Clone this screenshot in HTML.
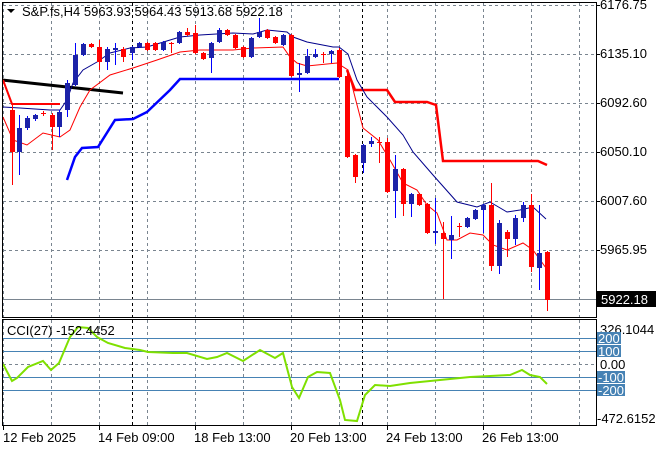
<!DOCTYPE html>
<html><head><meta charset="utf-8"><style>
html,body{margin:0;padding:0;background:#fff;}
svg{display:block;font-family:"Liberation Sans",sans-serif;font-size:13px;}
</style></head><body>
<svg width="660" height="450" viewBox="0 0 660 450" xmlns="http://www.w3.org/2000/svg">
<rect width="660" height="450" fill="#fff"/>
<g stroke="#7a8590" stroke-dasharray="3,3" stroke-width="1">
<path d="M3.5 3V317M51.5 3V317M99.5 3V317M147.5 3V317M195.5 3V317M243.5 3V317M291.5 3V317M339.5 3V317M387.5 3V317M435.5 3V317M483.5 3V317M531.5 3V317M579.5 3V317"/>
<path d="M3 5.5H596M3 54.5H596M3 103.5H596M3 152.5H596M3 201.5H596M3 250.5H596"/>
<path d="M3.5 320V425M51.5 320V425M99.5 320V425M147.5 320V425M195.5 320V425M243.5 320V425M291.5 320V425M339.5 320V425M387.5 320V425M435.5 320V425M483.5 320V425M531.5 320V425M579.5 320V425"/>
<path d="M3 364.5H596"/>
</g>
<g stroke="#000" stroke-dasharray="3,3"><path d="M132.5 3V317M362.5 3V317M132.5 320V425M362.5 320V425"/></g>
<path d="M3 299.5H596" stroke="#7a8590"/>
<g stroke="#4682b4"><path d="M3 338.5H596M3 351.5H596M3 377.5H596M3 390.5H596"/></g>
<polyline fill="none" stroke="#000" stroke-width="3" points="2,80 123,93"/>
<polyline fill="none" stroke="#f00" stroke-width="2" points="3,80 12,104 60,104"/>
<polyline fill="none" stroke="#00f" stroke-width="2.5" points="67,180 75,157 82,148 98,147 115,120 133,119 147,112 170,90 180,79 339,79"/>
<polyline fill="none" stroke="#f00" stroke-width="2.5" points="347,70 355,90 387,90 395,102 427,102 436,105 443,161 538,161 547,165"/>
<polyline fill="none" stroke="#00008b" stroke-width="1" points="3,107 20,108 50,110 60,110 67,100 73,83 83,70 97,62 110,53 130,48 147,47 180,37 200,35 233,33 253,34 267,30 287,32 293,37 307,42 333,47 339,47 348,54 357,80 367,97 387,117 403,135 413,152 433,175 457,202 477,207 490,202 507,212 520,210 533,207 546,219"/>
<polyline fill="none" stroke="#f00" stroke-width="1" points="3,117 13,140 27,145 43,133 60,137 70,130 80,107 90,90 110,75 133,68 157,60 180,52 200,50 233,50 253,48 283,47 290,57 297,63 307,66 337,63 348,70 363,128 378,140 390,160 403,183 417,190 427,205 437,213 447,240 457,240 470,233 483,235 493,245 507,250 523,243 533,250 546,268"/>
<path stroke="#f00" stroke-width="1" fill="none" d="M12.5 105V185M43.5 111V116M52.5 113V150M91.5 43V48M99.5 40V70M123.5 47V62M147.5 42V51M155.5 42V51M171.5 42V53M187.5 28V36M195.5 25V54M203.5 52V60M227.5 29V36M235.5 34V49M243.5 46V58M267.5 29V39M275.5 36V44M291.5 34V77M323.5 52V63M339.5 48V78M347.5 72V158M355.5 154V183M379.5 137V163M387.5 138V193M403.5 168V216M419.5 193V206M427.5 203V234M443.5 222V299M459.5 223V237M491.5 183V271M507.5 230V257M531.5 194V272M547.5 251V311"/>
<g fill="#f00">
<rect x="10" y="110" width="5" height="42"/><rect x="41" y="113" width="5" height="1"/><rect x="50" y="115" width="5" height="12"/><rect x="89" y="44" width="5" height="3"/><rect x="97" y="47" width="5" height="15"/><rect x="121" y="49" width="5" height="8"/><rect x="145" y="43" width="5" height="7"/><rect x="153" y="43" width="5" height="7"/><rect x="169" y="43" width="5" height="1"/><rect x="185" y="32" width="5" height="3"/><rect x="193" y="33" width="5" height="20"/><rect x="201" y="53" width="5" height="6"/><rect x="225" y="30" width="5" height="5"/><rect x="233" y="35" width="5" height="13"/><rect x="241" y="47" width="5" height="10"/><rect x="265" y="30" width="5" height="8"/><rect x="273" y="37" width="5" height="6"/><rect x="289" y="35" width="5" height="41"/><rect x="321" y="54" width="5" height="1"/><rect x="337" y="50" width="5" height="27"/><rect x="345" y="76" width="5" height="81"/><rect x="353" y="155" width="5" height="22"/><rect x="377" y="142" width="5" height="1"/><rect x="385" y="142" width="5" height="50"/><rect x="401" y="169" width="5" height="35"/><rect x="417" y="194" width="5" height="11"/><rect x="425" y="204" width="5" height="29"/><rect x="441" y="233" width="5" height="6"/><rect x="457" y="226" width="5" height="1"/><rect x="489" y="205" width="5" height="61"/><rect x="505" y="232" width="5" height="7"/><rect x="529" y="205" width="5" height="62"/><rect x="545" y="252" width="5" height="48"/>
</g>
<path stroke="#0000ff" stroke-width="1" fill="none" d="M19.5 115V175M27.5 116V130M35.5 114V121M59.5 110V137M67.5 80V117M75.5 43V86M83.5 43V56M107.5 47V70M115.5 43V65M132.5 46V60M139.5 42V48M163.5 41V51M179.5 31V44M211.5 42V73M219.5 28V43M251.5 37V58M259.5 18V38M283.5 34V46M299.5 63V92M307.5 49V74M315.5 49V58M331.5 50V63M363.5 144V173M371.5 137V147M395.5 155V218M411.5 193V217M435.5 198V244M451.5 216V259M467.5 217V228M475.5 209V220M483.5 204V233M499.5 220V274M515.5 215V245M523.5 202V222M539.5 205V290"/>
<g fill="#1c22a8">
<rect x="17" y="128" width="5" height="24"/><rect x="25" y="118" width="5" height="10"/><rect x="33" y="115" width="5" height="4"/><rect x="57" y="112" width="5" height="15"/><rect x="65" y="83" width="5" height="27"/><rect x="73" y="55" width="5" height="30"/><rect x="81" y="44" width="5" height="11"/><rect x="105" y="49" width="5" height="13"/><rect x="113" y="48" width="5" height="2"/><rect x="130" y="47" width="5" height="6"/><rect x="137" y="43" width="5" height="4"/><rect x="161" y="42" width="5" height="8"/><rect x="177" y="32" width="5" height="11"/><rect x="209" y="43" width="5" height="15"/><rect x="217" y="30" width="5" height="12"/><rect x="249" y="38" width="5" height="19"/><rect x="257" y="32" width="5" height="5"/><rect x="281" y="35" width="5" height="10"/><rect x="297" y="73" width="5" height="2"/><rect x="305" y="56" width="5" height="17"/><rect x="313" y="54" width="5" height="3"/><rect x="329" y="51" width="5" height="3"/><rect x="361" y="145" width="5" height="18"/><rect x="369" y="141" width="5" height="3"/><rect x="393" y="169" width="5" height="22"/><rect x="409" y="194" width="5" height="10"/><rect x="433" y="231" width="5" height="2"/><rect x="449" y="235" width="5" height="5"/><rect x="465" y="218" width="5" height="9"/><rect x="473" y="210" width="5" height="9"/><rect x="481" y="205" width="5" height="5"/><rect x="497" y="223" width="5" height="43"/><rect x="513" y="218" width="5" height="21"/><rect x="521" y="205" width="5" height="13"/><rect x="537" y="253" width="5" height="15"/>
</g>
<polyline fill="none" stroke="#7fe000" stroke-width="2" points="3,364 12,381 17,378 28,367 43,361 51,370 59,363 70,337 78,327 88,328 97,337 108,343 125,348 140,350 148,352 173,353 187,353 207,359 217,357 227,353 243,361 260,350 275,358 283,353 292,387 299,398 308,377 317,372 330,373 340,400 345,420 357,421 365,395 375,385 390,386 410,383 440,380 470,377 490,376 510,375 522,370 530,375 540,377 547,384"/>
<rect x="2.5" y="2.5" width="594" height="315" fill="none" stroke="#000"/>
<rect x="2.5" y="319.5" width="594" height="106" fill="none" stroke="#000"/>
<path d="M7 9H15L11 13Z" fill="#000"/>
<text x="22" y="16" fill="#000">S&amp;P.fs,H4  5963.93 5964.43 5913.68 5922.18</text>
<text x="7" y="335" fill="#000">CCI(27) -152.4452</text>
<g fill="#000">
<text x="600" y="9">6176.75</text>
<text x="600" y="58">6135.10</text>
<text x="600" y="107">6092.60</text>
<text x="600" y="156">6050.10</text>
<text x="600" y="205">6007.60</text>
<text x="600" y="254">5965.95</text>
</g>
<g stroke="#000"><path d="M597 5.5H600M597 54.5H600M597 103.5H600M597 152.5H600M597 201.5H600M597 250.5H600"/></g>
<rect x="597" y="291" width="59" height="16" fill="#000"/>
<text x="601" y="304" fill="#fff">5922.18</text>
<text x="600" y="334" fill="#000">326.1044</text>
<g fill="#4682b4"><rect x="597" y="332" width="24" height="12"/><rect x="597" y="345" width="24" height="12"/><rect x="597" y="371" width="28" height="12"/><rect x="597" y="384" width="28" height="12"/></g>
<g fill="#fff"><text x="598" y="343">200</text><text x="598" y="356">100</text><text x="598" y="382">-100</text><text x="598" y="395">-200</text></g>
<text x="600" y="369" fill="#000">0.00</text>
<text x="597" y="423" fill="#000">-472.6152</text>
<g stroke="#000"><path d="M3.5 426V430M99.5 426V430M195.5 426V430M291.5 426V430M387.5 426V430M483.5 426V430"/></g>
<g fill="#000">
<text x="3" y="442">12 Feb 2025</text>
<text x="98" y="442">14 Feb 09:00</text>
<text x="194" y="442">18 Feb 13:00</text>
<text x="290" y="442">20 Feb 13:00</text>
<text x="386" y="442">24 Feb 13:00</text>
<text x="482" y="442">26 Feb 13:00</text>
</g>
</svg>
</body></html>
